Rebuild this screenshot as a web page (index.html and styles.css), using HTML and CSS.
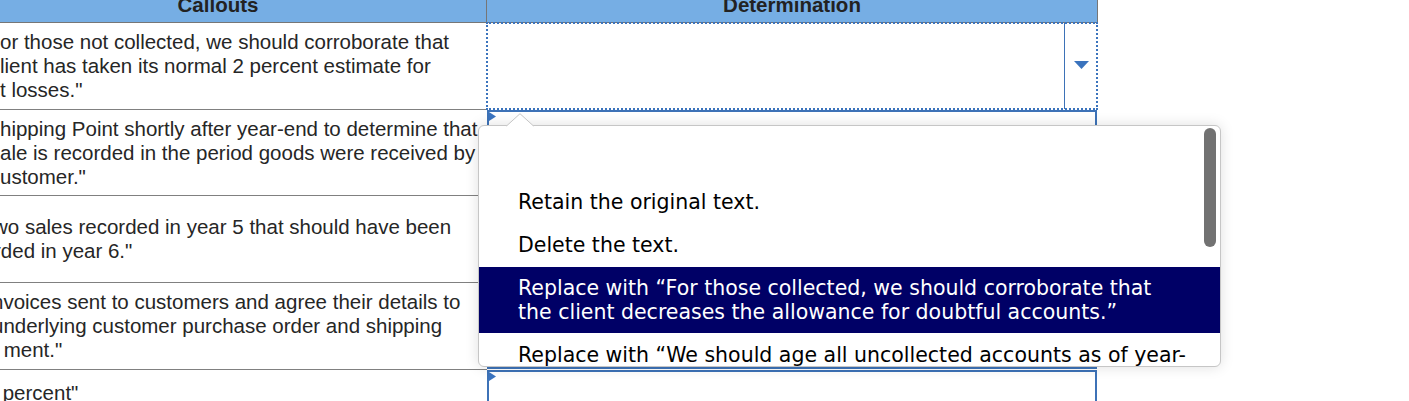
FILE: index.html
```html
<!DOCTYPE html>
<html lang="en">
<head>
<meta charset="utf-8">
<title>Callouts</title>
<link rel="stylesheet" href="styles.css">
</head>
<body>
<div class="sheet">
  <div class="hcell">Callouts</div>
  <div class="hcell">Determination</div>

  <div class="callout">
    <div class="lines">
      <span class="ln">or those not collected, we should corroborate that</span>
      <span class="ln">lient has taken its normal 2 percent estimate for</span>
      <span class="ln">t losses."</span>
    </div>
  </div>
  <div class="det">
    <div class="sel focus">
      <span class="val"></span>
      <span class="btn"><svg class="arrow" width="15" height="8" viewBox="0 0 15 8"><polygon points="0,0 15,0 7.5,8"/></svg></span>
    </div>
  </div>

  <div class="callout">
    <div class="lines">
      <span class="ln">hipping Point shortly after year-end to determine that</span>
      <span class="ln">ale is recorded in the period goods were received by</span>
      <span class="ln">ustomer."</span>
    </div>
  </div>
  <div class="det">
    <div class="sel boxed">
      <svg class="flag" width="7" height="9" viewBox="0 0 7 9"><polygon points="0,0 7,4.5 0,9"/></svg>
    </div>
  </div>

  <div class="callout">
    <div class="lines">
      <span class="ln in7">wo sales recorded in year 5 that should have been</span>
      <span class="ln in6">rded in year 6."</span>
    </div>
  </div>
  <div class="det">
    <div class="sel boxed">
      <svg class="flag" width="7" height="9" viewBox="0 0 7 9"><polygon points="0,0 7,4.5 0,9"/></svg>
    </div>
  </div>

  <div class="callout">
    <div class="lines">
      <span class="ln in8">nvoices sent to customers and agree their details to</span>
      <span class="ln in8">underlying customer purchase order and shipping</span>
      <span class="ln in2">&nbsp;ment."</span>
    </div>
  </div>
  <div class="det">
    <div class="sel boxed">
      <svg class="flag" width="7" height="9" viewBox="0 0 7 9"><polygon points="0,0 7,4.5 0,9"/></svg>
    </div>
  </div>

  <div class="callout top">
    <div class="lines">
      <span class="ln in3">&nbsp;percent"</span>
    </div>
  </div>
  <div class="det">
    <div class="sel boxed">
      <svg class="flag" width="7" height="9" viewBox="0 0 7 9"><polygon points="0,0 7,4.5 0,9"/></svg>
    </div>
  </div>
</div>

<div class="popup">
  <svg class="caret" width="28" height="13" viewBox="0 0 28 13"><path d="M0.5 13 L14 0.7 L27.5 13" /></svg>
  <ul class="list">
    <li class="opt">&nbsp;</li>
    <li class="opt">Retain the original text.</li>
    <li class="opt">Delete the text.</li>
    <li class="opt active">Replace with “For those collected, we should corroborate that<br>the client decreases the allowance for doubtful accounts.”</li>
    <li class="opt">Replace with “We should age all uncollected accounts as of year-</li>
  </ul>
  <div class="thumb"></div>
</div>
</body>
</html>
```

FILE: styles.css
```css
html, body {
  margin: 0;
  padding: 0;
  background: #ffffff;
  overflow: hidden;
}

body {
  width: 1409px;
  height: 401px;
  position: relative;
}

.sheet {
  display: grid;
  grid-template-columns: 537px 611px;
  grid-template-rows: 33px 87px 86px 87px 87px 87px;
  width: 1148px;
  margin-top: -10px;
  margin-left: -50px;
  font-family: "Liberation Sans", Arial, sans-serif;
  font-size: 20.5px;
  color: #262626;
}

.hcell {
  box-sizing: border-box;
  background: #76aee4;
  border-right: 1px solid #767676;
  border-bottom: 1px solid #767676;
  font-weight: bold;
  color: #222222;
  display: flex;
  align-items: center;
  justify-content: center;
  line-height: 24px;
  padding-bottom: 3px;
}

.callout {
  box-sizing: border-box;
  border-bottom: 1px solid #808080;
  display: flex;
  align-items: center;
  padding-left: 50px;
  white-space: nowrap;
  line-height: 24px;
  overflow: hidden;
}

.callout.top {
  align-items: flex-start;
  padding-top: 11px;
  border-bottom: none;
}

.lines {
  display: flex;
  flex-direction: column;
}

.ln {
  display: block;
}

.in2 { margin-left: -2px; }
.in3 { margin-left: -3px; }
.in6 { margin-left: -6px; }
.in7 { margin-left: -7px; }
.in8 { margin-left: -8px; }

.det {
  box-sizing: border-box;
  padding: 0 1px 1px 0;
  display: flex;
}

.sel {
  position: relative;
  box-sizing: border-box;
  flex: 1;
  display: flex;
  background: #ffffff;
}

.sel.focus::after {
  content: "";
  position: absolute;
  left: -1px;
  top: -1px;
  right: -1px;
  bottom: -1px;
  border: 2px dotted #3b74bd;
  pointer-events: none;
}

.sel.boxed {
  border: 2px solid #3d72b7;
}

.val {
  flex: 1;
}

.btn {
  width: 32px;
  border-left: 1px solid #3d72b7;
  display: flex;
  align-items: center;
  justify-content: center;
  padding-bottom: 3px;
}

.arrow polygon {
  fill: #3a73bd;
}

.flag {
  position: absolute;
  left: 0;
  top: 0;
}

.flag polygon {
  fill: #3b74c0;
}

.popup {
  position: absolute;
  left: 478px;
  top: 125px;
  width: 743px;
  height: 242px;
  box-sizing: border-box;
  border: 1px solid #c6c6c6;
  border-radius: 6px;
  background: #ffffff;
  box-shadow: 0 0 14px rgba(0, 0, 0, 0.13);
  z-index: 5;
  font-family: "DejaVu Sans", Verdana, sans-serif;
  font-size: 20.5px;
  color: #000000;
}

.caret {
  position: absolute;
  left: 27px;
  top: -13px;
  overflow: visible;
}

.caret path {
  fill: #ffffff;
  stroke: #c6c6c6;
  stroke-width: 1;
}

.list {
  list-style: none;
  margin: 0;
  padding: 12px 0 0 0;
  height: 100%;
  box-sizing: border-box;
  overflow: hidden;
  border-radius: 6px;
}

.opt {
  padding: 9px 20px 9px 39px;
  line-height: 24px;
  margin-bottom: 1px;
  white-space: nowrap;
}

.opt.active {
  background: #000066;
  color: #ffffff;
}

.thumb {
  position: absolute;
  right: 4px;
  top: 2px;
  width: 12px;
  height: 119px;
  border-radius: 6px;
  background: #727272;
}
```
